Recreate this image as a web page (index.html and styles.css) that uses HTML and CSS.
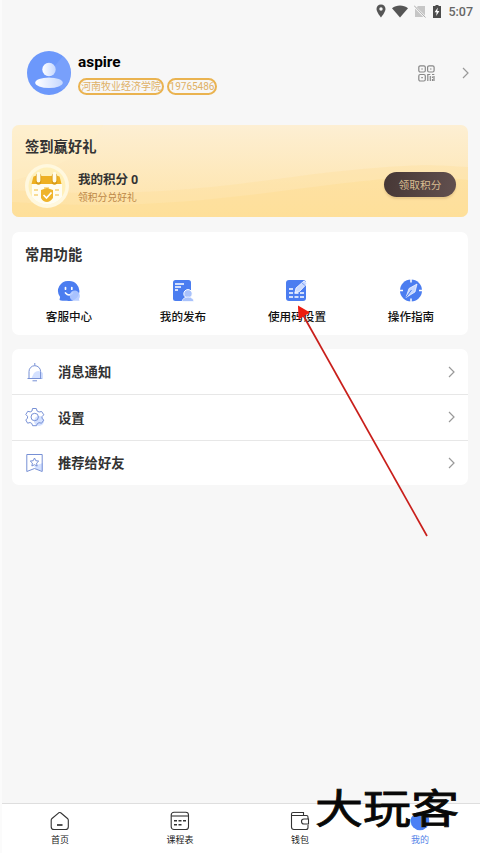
FILE: index.html
```html
<!DOCTYPE html>
<html lang="zh-CN">
<head>
<meta charset="utf-8">
<title>我的</title>
<link rel="stylesheet" href="styles.css">
</head>
<body>
<div class="screen">
  <header class="status">
    <svg width="10" height="14" viewBox="0 0 10 14"><path fill="#555" fill-rule="evenodd" d="M5 .5C2.300.5.500 2.500.500 5c0 3 4.500 8.500 4.500 8.500S9.500 8 9.500 5C9.500 2.500 7.700.500 5 .5zM5 3.300a1.700 1.700 0 1 1 0 3.400 1.700 1.700 0 0 1 0-3.400z"/></svg>
    <svg class="wifi" width="16" height="13" viewBox="0 0 16 13"><path fill="#555" d="M0 3.200C4.500-.500 11.500-.500 16 3.200L8 12.500z"/></svg>
    <svg class="sim" width="12" height="13" viewBox="0 0 12 13"><path fill="#c6c6c6" d="M4 1h7v11H1V4z"/><path d="M0 1l12 12" stroke="#f7f7f7" stroke-width="2.200"/><path d="M0 .5l11.500 12" stroke="#aaa"/></svg>
    <svg class="battery" width="8" height="13" viewBox="0 0 8 13"><path fill="#4c4c4c" d="M2.500 0h3v1H8v12H0V1h2.500z"/><path fill="#fff" d="M4.800 2.500L1.600 7.300h2L3.200 11l3.200-5H4.300z"/></svg>
    <span class="clock">5:07</span>
  </header>

  <section class="profile">
    <svg class="avatar" width="44" height="44" viewBox="0 0 44 44">
      <defs><linearGradient id="person" x1="0" x2="1"><stop offset="0" stop-color="#fff"/><stop offset="1" stop-color="#c4d7ff"/></linearGradient></defs>
      <circle cx="22" cy="22" r="22" fill="#6c98fb"/><path d="M22 22L36 5a22 22 0 0 1-1 34z" fill="#83a8fb" opacity=".55"/>
      <circle cx="22" cy="18.500" r="6.700" fill="url(#person)"/><ellipse cx="22" cy="31.700" rx="13.800" ry="5.200" fill="url(#person)"/>
    </svg>
    <div class="identity">
      <div class="name">aspire</div>
      <div class="tags"><span class="tag school">河南牧业经济学院</span><span class="tag number">19765486</span></div>
    </div>
    <svg class="qr" width="17" height="17" viewBox="0 0 17 17" fill="none" stroke="#888" stroke-width="1.200"><rect x=".8" y=".8" width="6.500" height="6.200" rx="1.500"/><rect x="9.600" y=".8" width="6.500" height="6.200" rx="1.500"/><rect x=".8" y="9.500" width="6.500" height="6.500" rx="1.500"/><path d="M3.300 4h1.500M12 4h1.500M3.300 12.700h1.500M9.300 9.500h3M9.800 9v7M12.300 11v5M14 9.500h2.300M14.500 11.500v1.500M14.500 14v2M16 11v5"/></svg>
    <svg class="arrow" width="7" height="12" viewBox="0 0 7 12"><path d="M1 1l5 5-5 5"/></svg>
  </section>

  <section class="banner">
    <svg class="waves" width="456" height="92" viewBox="0 0 456 92"><path d="M0 0h91Q76 35 0 56z" fill="#fff0c8" opacity=".35"/><path d="M0 65C155 76 250 54 330 46s90-6 126-4v50H0z" fill="#ffdd94" opacity=".3"/><path d="M0 77c140 10 240-8 325-18s95-8 131-4v37H0z" fill="#ffda87" opacity=".3"/></svg>
    <h2>签到赢好礼</h2>
    <div class="points">
      <svg width="44" height="44" viewBox="0 0 44 44"><defs><clipPath id="badge"><circle cx="22" cy="22" r="18.500"/></clipPath></defs><circle cx="22" cy="22" r="22" fill="#fff8df"/><circle cx="22" cy="22" r="18.500" fill="#fff0ba"/><g clip-path="url(#badge)"><path d="M7 20h30v22H7z" fill="#fffdf2"/><path d="M8 14q0-2 2-2h23q2 0 2 2l1.500 6h-30z" fill="#eeb023"/><path d="M13.500 12v6M29.500 12v6" stroke="#d99c15" stroke-width="5.500" stroke-linecap="round"/><path d="M13.500 10v6.500M29.500 10v6.500" stroke="#fffbe9" stroke-width="3.800" stroke-linecap="round"/><path d="M9 26h4M9 31h4M30 26h4M30 31h4M19 24h5" stroke="#f8dc94" stroke-width="2"/></g><path d="M16 26l6-2 6 2v8q-3 4-6 4-4 0-6-4z" fill="#efb42c"/><path d="M18.500 31l3 3 5-5.500" stroke="#fff" stroke-width="1.700" fill="none"/></svg>
      <div class="points-text"><strong>我的积分 0</strong><span>领积分兑好礼</span></div>
      <button class="claim">领取积分</button>
    </div>
  </section>

  <section class="card functions">
    <h2>常用功能</h2>
    <div class="grid">
      <div class="item"><svg width="24" height="24" viewBox="0 0 24 24"><path d="M12 2a10 10 0 1 1-2 19.700Q3 22 2.500 20.800l.6-2.800A10 10 0 0 1 12 2z" fill="#4b7df0"/><path d="M8.500 8.500v1.700M14.800 8.500v1.700M8.500 14q3.500 4 7 0" stroke="#fff" stroke-width="1.700" stroke-linecap="round" fill="none"/><path d="M18 11.500a5.500 5.500 0 0 1 4 8.500l.5 1.800H17a5.200 5.200 0 0 1 1-10.300z" fill="#b2caff" opacity=".9"/></svg><span>客服中心</span></div>
      <div class="item"><svg width="24" height="24" viewBox="0 0 24 24"><rect x="2" y="1" width="18" height="21" rx="2.500" fill="#4b7df0"/><path d="M4 5h9M4 8h6M4 11h3" stroke="#fff" stroke-width="1.500"/><circle cx="17" cy="14.800" r="4.200" fill="#a9c2fb" stroke="#fff"/><path d="M11 22.500q1-4.500 6-4.500t6 4.500z" fill="#a9c2fb" stroke="#fff" stroke-width=".7"/></svg><span>我的发布</span></div>
      <div class="item"><svg width="24" height="24" viewBox="0 0 24 24"><rect x="1" y="1" width="20" height="21" rx="3" fill="#4b7df0"/><path d="M4 10h4M4 14h4M9.500 14h4M15 14h4M4 18h4M9.500 18h4M15 18h4" stroke="#fff" stroke-width="1.700"/><path d="M10 13.500l1-4.500 8-7 3 2.500-7.500 8z" fill="#c9d9ff" stroke="#fff" stroke-width=".8"/><path d="M17 4l3 2.500" stroke="#799ffa"/></svg><span>使用码设置</span></div>
      <div class="item"><svg width="24" height="24" viewBox="0 0 24 24"><circle cx="12" cy="11.500" r="11" fill="#4b7df0"/><path d="M12 0v3.500M12 19.500V23M.5 11.500H4M20 11.500h3.500" stroke="#fff" stroke-width="1.500"/><path d="M18 5l-2 8-9 5.500 3-9z" fill="#c5d7ff" stroke="#fff" stroke-width=".7"/><path d="M7 18.500L12.500 11" stroke="#4b7df0"/></svg><span>操作指南</span></div>
    </div>
  </section>

  <section class="card list">
    <div class="row"><svg class="line-icon" width="20" height="20" viewBox="0 0 20 20"><path class="tint" d="M9 11q4-4 9 0v6H6z"/><path d="M2.500 16.500h14M4 16V9.500a5.800 5.800 0 0 1 11.600 0V16M9.800 3.500V1M7.500 18.800h4.500"/></svg><span>消息通知</span><svg class="arrow" width="7" height="12" viewBox="0 0 7 12"><path d="M1 1l5 5-5 5"/></svg></div>
    <div class="row"><svg class="line-icon" width="20" height="20" viewBox="0 0 20 20"><circle class="tint" cx="14" cy="14" r="5"/><path d="M7.500 1.500h3.800l.8 2.500 2 1 2.500-.5 2.200 3.300-1.800 1.800v1.600l1.700 2-2.100 3-2.600-.5-1.700 1-.8 2H7.600l-.8-2.200-1.700-1-2.500.7L.8 13l1.700-1.900V9.300L.8 7.500l2-3.200 2.500.6L7 4z"/><circle cx="9.700" cy="10" r="3.700"/></svg><span>设置</span><svg class="arrow" width="7" height="12" viewBox="0 0 7 12"><path d="M1 1l5 5-5 5"/></svg></div>
    <div class="row"><svg class="line-icon" width="20" height="20" viewBox="0 0 20 20"><path class="tint" d="M9 13l9-3v8l-7-2z"/><path d="M1.800 1.500h15.400v17l-7.700-3-7.700 3z"/><path d="M9.500 5l1.300 2.700 2.900.4-2.100 2 .5 3-2.600-1.400L6.900 13l.5-2.900-2.100-2 2.900-.4z"/></svg><span>推荐给好友</span><svg class="arrow" width="7" height="12" viewBox="0 0 7 12"><path d="M1 1l5 5-5 5"/></svg></div>
  </section>

  <nav class="tabs">
    <div class="tab"><svg width="20" height="20" viewBox="0 0 20 20"><path d="M8.700 1.800L2 7.500q-.8.700-.8 1.700v6.500q0 2.800 2.800 2.800h11.500q2.800 0 2.800-2.800V9.200q0-1-.8-1.700l-6.800-5.700q-1-.7-2 0z"/><path d="M7 14h5.500" stroke-width="1.700"/></svg><span>首页</span></div>
    <div class="tab"><svg width="20" height="20" viewBox="0 0 20 20"><rect x="1.200" y="1.200" width="17.300" height="17.300" rx="2.800"/><path d="M1.200 5h17.300"/><path d="M4 9.700h3M8.500 9.700h3M13 9.700h3M4 13.700h3M8.500 13.700h3" stroke-width="1.600"/></svg><span>课程表</span></div>
    <div class="tab"><svg width="20" height="20" viewBox="0 0 20 20"><path d="M18 8V6q0-1.500-1.500-1.500H1.500V16q0 2.500 2.500 2.500h12q2 0 2-2V14M1.500 4.500V3q0-1.500 1.500-1.500h10.500v3M18.500 8H14q-2.500 0-2.500 2.200 0 2.800 2.500 2.800h4.500z"/></svg><span>钱包</span></div>
    <div class="tab active"><svg width="20" height="20" viewBox="0 0 20 20"><circle cx="10" cy="10" r="9.300"/></svg><span>我的</span></div>
  </nav>

  <svg class="pointer" width="480" height="853" viewBox="0 0 480 853"><path d="M427 536L303 315" stroke="#c91f1b" stroke-width="1.700"/><path d="M298 305.500l12 7-11.500 7z" fill="#ec1c10"/></svg>
  <div class="watermark">大玩客</div>
</div>
</body>
</html>
```
FILE: styles.css
```css
* { box-sizing: border-box; }
body { margin: 0; font-family: Roboto, "Noto Sans CJK SC", sans-serif; color: #333; }
.screen { position: relative; width: 480px; height: 853px; overflow: hidden; display: flex; flex-direction: column; background: #f7f7f7; border-left: 2px solid #fbfbfb; padding: 0 12px 0 10px; }
svg { display: block; flex: none; }
h2 { margin: 0; font-size: 14.3px; line-height: 20px; font-weight: 700; }

.status { height: 22px; flex: none; display: flex; align-items: center; margin-right: -5px; justify-content: flex-end; }
.wifi { margin-left: 6px; }
.sim { margin-left: 6px; }
.battery { margin-left: 7px; }
.clock { margin-left: 7px; font-size: 12.5px; font-weight: 500; color: #666; }

.profile { height: 44px; flex: none; margin: 29px 0 30px; padding-left: 15px; display: flex; align-items: center; }
.identity { margin-left: 7px; align-self: flex-start; flex: 1; }
.name { font-size: 15.400px; line-height: 20px; margin-top: 1px; font-weight: 700; color: #000; }
.tags { display: flex; gap: 3px; margin-top: 6px; }
.tag { height: 17px; border: 2px solid #eab350; border-radius: 9px; font-size: 10px; line-height: 14px; color: #dfb166; display: flex; justify-content: center; white-space: nowrap; }
.school { width: 86px; }
.number { width: 50px; }
.qr { margin-right: 27px; }
.profile .arrow { margin-right: -1px; }
.arrow path { fill: none; stroke: #999; stroke-width: 1.200; }

.banner { position: relative; height: 92px; flex: none; padding: 12px 12px 12px 13px; border-radius: 7px; overflow: hidden; background: linear-gradient(#fdefd3, #fee3a8); }
.waves { position: absolute; left: 0; top: 0; }
.banner h2, .points { position: relative; }
.points { display: flex; align-items: center; margin-top: 7px; height: 44px; }
.points-text { flex: 1; margin: 4px 0 0 9px; display: flex; flex-direction: column; }
.points-text strong { font-size: 12.500px; line-height: 18px; }
.points-text span { font-size: 9.800px; line-height: 16px; margin-top: 1px; color: #bc8748; }
.claim { width: 72px; height: 25px; margin-top: -3px; padding: 0; border: 0; border-radius: 13px; background: linear-gradient(100deg, #463735, #62504f); color: #d9bd91; font: 10.700px/25px "Noto Sans CJK SC", sans-serif; box-shadow: 0 2px 2px #bd986055; }

.card { background: #fff; border-radius: 7px; flex: none; }
.functions { height: 103px; margin-top: 15px; padding-top: 13px; }
.functions h2 { padding-left: 13px; }
.grid { display: grid; grid-template-columns: repeat(4, 1fr); margin-top: 14px; }
.item { display: flex; flex-direction: column; align-items: center; font-size: 11.600px; line-height: 18px; font-weight: 500; color: #111; }
.item span { margin-top: 5px; }

.list { margin-top: 14px; }
.row { height: 45px; display: flex; align-items: center; padding: 0 13px; font-size: 13.300px; font-weight: 700; }
.row + .row { height: 45.500px; border-top: 1px solid #e7e7e7; }
.row span { flex: 1; margin-left: 13px; }
.line-icon path, .line-icon circle { fill: none; stroke: #7790d5; stroke-width: 1; }
.line-icon .tint { fill: #d4e1ff; stroke: none; }

.tabs { height: 50px; flex: none; margin: auto -12px 0; background: #fff; border-top: 1px solid #dedede; display: grid; grid-template-columns: repeat(4, 1fr); }
.tab { display: flex; flex-direction: column; align-items: center; padding-top: 7px; font-size: 9px; line-height: 14px; color: #222; }
.tab span { margin-top: 2px; }
.tab svg { fill: none; stroke: #333; stroke-width: 1.100; }
.tab.active { color: #5484e8; }
.active svg { fill: #4b80f5; stroke: none; }

.pointer { position: absolute; left: -2px; top: 0; }
.watermark { position: absolute; left: 313px; top: 781px; font: 400 48px/48px "Noto Sans CJK SC", sans-serif; color: #080808; white-space: nowrap; transform: scaleY(.84); -webkit-text-stroke: 1px #080808; text-shadow: 0 0 1px #ffffd0; }
```
